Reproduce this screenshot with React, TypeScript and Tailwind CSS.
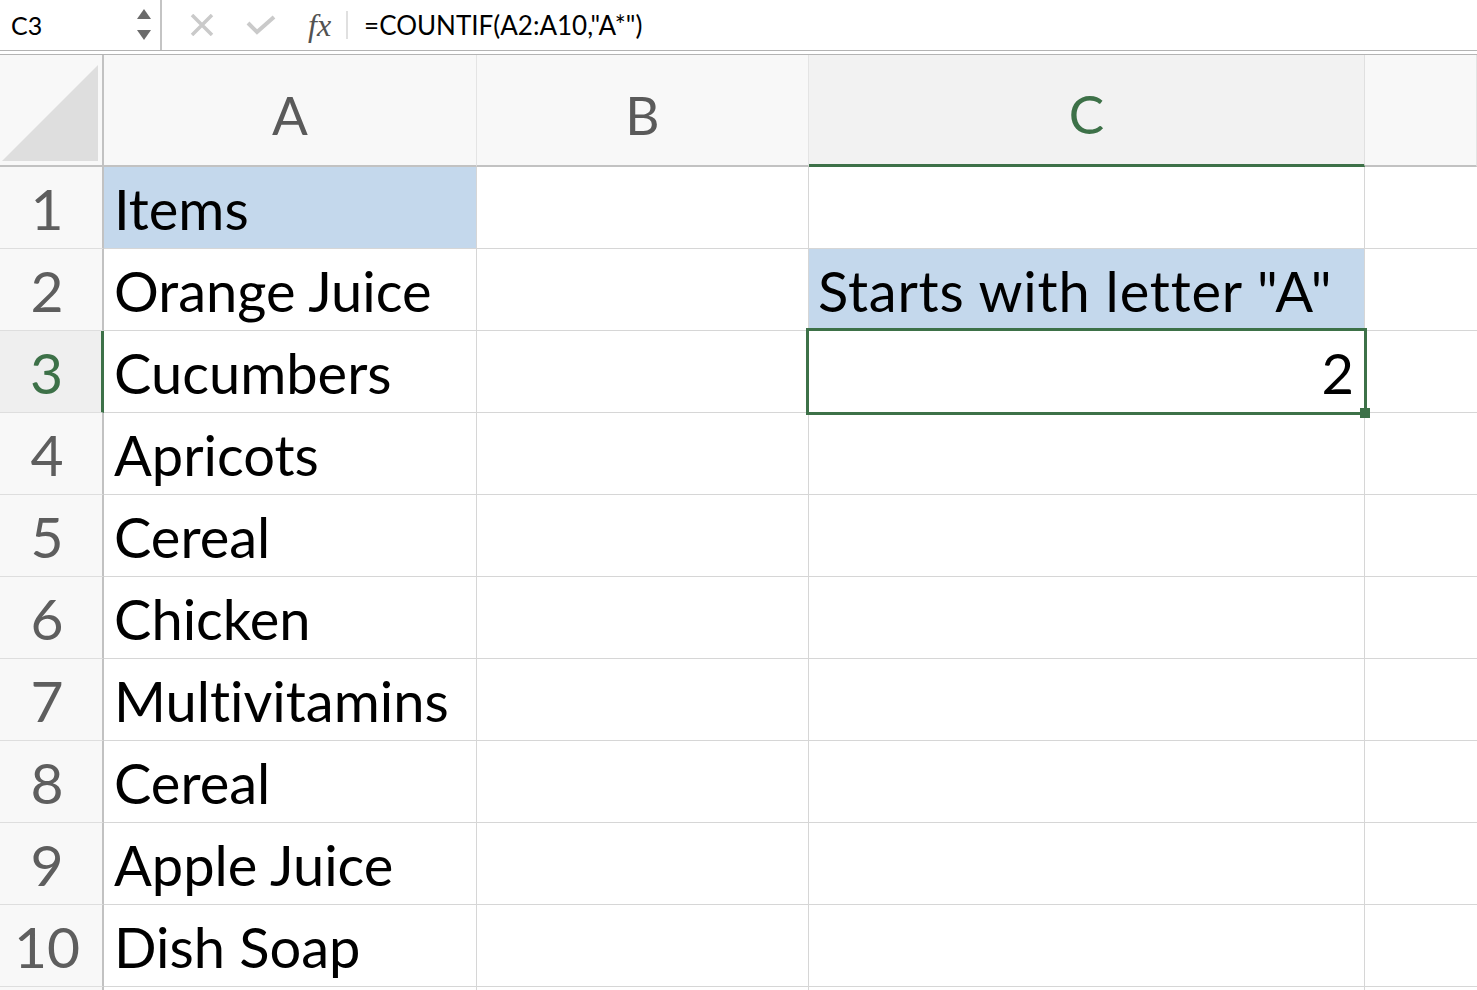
import React from 'react'

const items = ['Items', 'Orange Juice', 'Cucumbers', 'Apricots', 'Cereal', 'Chicken', 'Multivitamins', 'Cereal', 'Apple Juice', 'Dish Soap', '']

function FormulaBar() {
  return (
    <div className="flex h-[50px] items-center bg-white">
      <div className="flex h-full w-[160px] items-center justify-between pl-[11px] pr-[9px]">
        <span className="text-[25px] leading-none text-black">C3</span>
        <svg width="14" height="32" viewBox="0 0 14 32">
          <path d="M0 10 L7 0 L14 10 Z" fill="#6b6b6b" />
          <path d="M0 21 L7 31 L14 21 Z" fill="#6b6b6b" />
        </svg>
      </div>
      <div className="h-full w-[2px] bg-[#c4c4c4]" />
      <div className="ml-[28px] flex items-center">
        <svg width="24" height="22" viewBox="0 0 24 22">
          <path d="M2 1 L22 21 M22 1 L2 21" stroke="#cacaca" strokeWidth="3.5" fill="none" />
        </svg>
      </div>
      <div className="ml-[32px] flex items-center">
        <svg width="30" height="20" viewBox="0 0 30 20">
          <path d="M2 8 L11 17 L28 2" stroke="#cacaca" strokeWidth="4" fill="none" />
        </svg>
      </div>
      <span className="ml-[32px] font-['Liberation_Serif'] text-[32px] italic leading-none text-[#525252]">fx</span>
      <div className="ml-[15px] h-[28px] w-[2px] bg-[#e0e0e0]" />
      <span className="ml-[16px] text-[26px] leading-none text-black">=COUNTIF(A2:A10,"A*")</span>
    </div>
  )
}

export default function App() {
  return (
    <div className="h-[990px] w-[1477px] overflow-hidden bg-white font-['Lato',sans-serif] [font-variant-ligatures:none]">
      <FormulaBar />
      <div className="h-[5px] border-t border-b border-[#b4b4b4]" />
      <div className="grid grid-cols-[104px_373px_332px_556px_1fr] grid-rows-[112px_repeat(11,82px)]">
        {/* header row */}
        <div className="flex items-end justify-end border-r-2 border-b-2 border-[#c2c2c2] bg-[#f8f8f8] pb-[4px] pr-[4px]">
          <svg width="96" height="96" viewBox="0 0 96 96">
            <path d="M0 96 L96 0 L96 96 Z" fill="#dedede" />
          </svg>
        </div>
        {['A', 'B', 'C', ''].map((c, i) => (
          <div
            key={i}
            className={
              c === 'C'
                ? 'flex items-center justify-center border-r border-b-[3px] border-r-[#e0e0e0] border-b-[#3d7148] bg-[#f2f2f2] pt-[8px] text-[53px] leading-none text-[#3d7148]'
                : 'flex items-center justify-center border-r border-b-2 border-r-[#e4e4e4] border-b-[#c2c2c2] bg-[#f8f8f8] pt-[8px] text-[53px] leading-none text-[#5a5a5a]'
            }
          >
            {c}
          </div>
        ))}
        {items.map((it, r) => (
          <React.Fragment key={r}>
            <div
              className={
                r === 2
                  ? 'flex items-center justify-center border-r-[3px] border-b border-r-[#3d7148] border-b-[#dedede] bg-[#efefef] pr-[8px] pt-[2px] text-[57px] leading-none text-[#3d7148]'
                  : 'flex items-center justify-center border-r-2 border-b border-r-[#c2c2c2] border-b-[#dedede] bg-[#f8f8f8] pr-[8px] pt-[2px] text-[57px] leading-none text-[#5e5e5e]'
              }
            >
              {r < 10 ? r + 1 : ''}
            </div>
            <div
              className={
                r === 0
                  ? 'flex items-center border-r border-b border-[#d6d6d6] bg-[#c4d8ec] pl-[10px] pt-[2px] text-[56px] leading-none text-black'
                  : 'flex items-center border-r border-b border-[#d6d6d6] pl-[10px] pt-[2px] text-[56px] leading-none text-black'
              }
            >
              {it}
            </div>
            <div className="border-r border-b border-[#d6d6d6]" />
            {r === 1 ? (
              <div className="flex items-center border-r border-b border-[#d6d6d6] bg-[#c4d8ec] pl-[9px] pt-[2px] text-[56px] leading-none tracking-[0.8px] text-black">
                Starts with letter "A"
              </div>
            ) : r === 2 ? (
              <div className="relative flex items-center justify-end border-r border-b border-[#d6d6d6] pr-[10px] pt-[2px] text-[56px] leading-none text-black">
                2
                <div className="absolute -top-[3px] -left-[3px] -right-[3px] -bottom-[3px] border-[3px] border-[#3d7148]" />
                <div className="absolute -right-[6px] -bottom-[6px] h-[10px] w-[10px] bg-[#3d7148]" />
              </div>
            ) : (
              <div className="border-r border-b border-[#d6d6d6]" />
            )}
            <div className="border-b border-[#d6d6d6]" />
          </React.Fragment>
        ))}
      </div>
    </div>
  )
}
